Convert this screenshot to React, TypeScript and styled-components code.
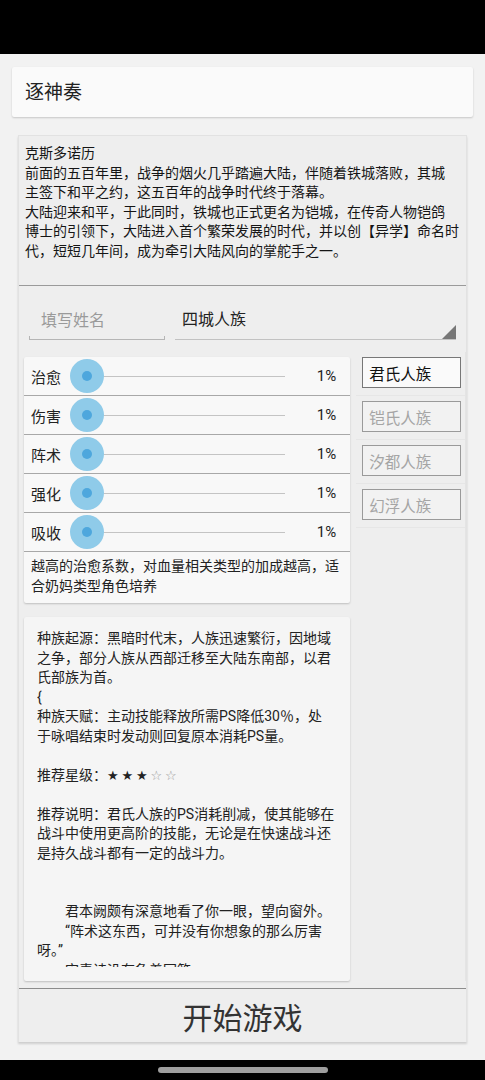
import React from 'react';
import styled, { createGlobalStyle } from 'styled-components';

const GlobalStyle = createGlobalStyle`
  html, body {
    margin: 0;
    padding: 0;
    background: #f2f2f2;
    font-family: Roboto, "Noto Sans CJK SC", sans-serif;
    color: #222;
  }
`;

const INTRO = [
  '克斯多诺历',
  '前面的五百年里，战争的烟火几乎踏遍大陆，伴随着铁城落败，其城',
  '主签下和平之约，这五百年的战争时代终于落幕。',
  '大陆迎来和平，于此同时，铁城也正式更名为铠城，在传奇人物铠鸽',
  '博士的引领下，大陆进入首个繁荣发展的时代，并以创【异学】命名时',
  '代，短短几年间，成为牵引大陆风向的掌舵手之一。',
];

const STATS = ['治愈', '伤害', '阵术', '强化', '吸收'];

const RACES = ['君氏人族', '铠氏人族', '汐都人族', '幻浮人族'];

const STORY = [
  '种族起源：黑暗时代末，人族迅速繁衍，因地域',
  '之争，部分人族从西部迁移至大陆东南部，以君',
  '氏部族为首。',
  '{',
  '种族天赋：主动技能释放所需PS降低30％，处',
  '于咏唱结束时发动则回复原本消耗PS量。',
  '',
  'STARS',
  '',
  '推荐说明：君氏人族的PS消耗削减，使其能够在',
  '战斗中使用更高阶的技能，无论是在快速战斗还',
  '是持久战斗都有一定的战斗力。',
  '',
  '',
  '　　君本阙颇有深意地看了你一眼，望向窗外。',
  '　　“阵术这东西，可并没有你想象的那么厉害',
  '呀。”',
  '　　宋责诗没有急着回答',
];

const RATING = 3;

export default function App() {
  return (
    <>
      <GlobalStyle />
      <Screen>
        <StatusBar />
        <Content>
          <TitleCard>逐神奏</TitleCard>
          <Panel>
            <Intro>
              {INTRO.map((l, i) => (
                <Line key={i}>{l}</Line>
              ))}
            </Intro>
            <FormRow>
              <NameInput>填写姓名</NameInput>
              <Spinner>
                四城人族
                <SpinnerArrow />
              </Spinner>
            </FormRow>
            <Body>
              <LeftCol>
                <SliderCard>
                  {STATS.map(s => (
                    <SliderRow key={s}>
                      <StatLabel>{s}</StatLabel>
                      <Slider>
                        <Track />
                        <Thumb />
                      </Slider>
                      <Percent>1%</Percent>
                    </SliderRow>
                  ))}
                  <StatHint>
                    越高的治愈系数，对血量相关类型的加成越高，适
                    <br />
                    合奶妈类型角色培养
                  </StatHint>
                </SliderCard>
                <StoryCard>
                  <StoryScroll>
                    {STORY.map((l, i) =>
                      l === 'STARS' ? (
                        <Line key={i}>
                          推荐星级：
                          {[0, 1, 2, 3, 4].map(n => (
                            <Star key={n} filled={n < RATING}>
                              {n < RATING ? '★' : '☆'}
                            </Star>
                          ))}
                        </Line>
                      ) : (
                        <Line key={i}>{l || '\u00a0'}</Line>
                      ),
                    )}
                  </StoryScroll>
                </StoryCard>
              </LeftCol>
              <RaceList>
                {RACES.map((r, i) => (
                  <RaceItem key={r}>
                    <RaceButton selected={i === 0}>{r}</RaceButton>
                  </RaceItem>
                ))}
              </RaceList>
            </Body>
            <StartButton>开始游戏</StartButton>
          </Panel>
        </Content>
        <NavBar>
          <NavPill />
        </NavBar>
      </Screen>
    </>
  );
}

const Screen = styled.div`
  display: flex;
  flex-direction: column;
  width: 485px;
  height: 1080px;
  overflow: hidden;
`;

const StatusBar = styled.div`
  height: 54px;
  background: #000;
  flex-shrink: 0;
`;

const Content = styled.div`
  flex: 1;
  display: flex;
  flex-direction: column;
  padding: 13px 12px 18px;
  min-height: 0;
`;

const TitleCard = styled.div`
  height: 50px;
  flex-shrink: 0;
  display: flex;
  align-items: center;
  padding: 0 0 3px 13px;
  box-sizing: border-box;
  background: #fafafa;
  border-radius: 2px;
  box-shadow: 0 1px 2px rgba(0, 0, 0, 0.18);
  font-size: 19px;
  color: #222;
  margin-bottom: 18px;
`;

const Panel = styled.div`
  flex: 1;
  margin: 0 6px;
  display: flex;
  flex-direction: column;
  background: #eeeeee;
  border: 1px solid #e2e2e2;
  border-bottom: none;
  box-shadow: 0 2px 2px rgba(0, 0, 0, 0.15);
  min-height: 0;
`;

const Line = styled.div`
  white-space: nowrap;
`;

const Intro = styled.div`
  height: 150px;
  flex-shrink: 0;
  padding: 8px 6px 0;
  box-sizing: border-box;
  font-size: 14px;
  line-height: 19.5px;
  color: #151515;
  border-bottom: 1px solid #9a9a9a;
`;

const FormRow = styled.div`
  height: 66px;
  flex-shrink: 0;
  display: flex;
  align-items: flex-end;
  gap: 10px;
  padding: 0 10px 12px 10px;
  box-sizing: border-box;
`;

const NameInput = styled.div`
  width: 136px;
  height: 40px;
  box-sizing: border-box;
  padding: 7px 0 0 11px;
  font-size: 16px;
  color: #9a9a9a;
  border-bottom: 1px solid #b5b5b5;
  border-left: 1px solid #b5b5b5;
  border-right: 1px solid #b5b5b5;
  border-image: linear-gradient(to top, #b5b5b5 0, #b5b5b5 4px, transparent 4px) 1;
`;

const Spinner = styled.div`
  flex: 1;
  position: relative;
  height: 40px;
  box-sizing: border-box;
  padding: 6px 0 0 7px;
  font-size: 16px;
  color: #222;
  border-bottom: 1px solid #c2c2c2;
`;

const SpinnerArrow = styled.div`
  position: absolute;
  right: 0;
  bottom: 0;
  width: 0;
  height: 0;
  border-left: 14px solid transparent;
  border-bottom: 14px solid #777;
`;

const Body = styled.div`
  flex: 1;
  display: flex;
  gap: 6px;
  min-height: 0;
`;

const LeftCol = styled.div`
  width: 327px;
  margin-left: 5px;
  display: flex;
  flex-direction: column;
  padding-top: 5px;
  gap: 14px;
`;

const SliderCard = styled.div`
  background: #f8f8f8;
  border-radius: 2px;
  box-shadow: 0 1px 2px rgba(0, 0, 0, 0.2);
`;

const SliderRow = styled.div`
  height: 38px;
  display: flex;
  align-items: center;
  padding: 0 14px 0 7px;
  border-bottom: 1px solid #a8a8a8;
`;

const StatLabel = styled.span`
  font-size: 15px;
  color: #222;
  width: 32px;
`;

const Slider = styled.div`
  position: relative;
  height: 38px;
  margin-left: 7px;
  width: 231px;
`;

const Track = styled.div`
  position: absolute;
  left: 17px;
  right: 16px;
  top: 19px;
  height: 1px;
  background: #c4c4c4;
`;

const Thumb = styled.div`
  position: absolute;
  left: 0;
  top: 2px;
  width: 34px;
  height: 34px;
  border-radius: 50%;
  background: #8fcbe9;
  &::after {
    content: '';
    position: absolute;
    left: 12px;
    top: 12px;
    width: 10px;
    height: 10px;
    border-radius: 50%;
    background: #4ea7dd;
  }
`;

const Percent = styled.span`
  margin-left: auto;
  font-size: 15px;
  color: #222;
`;

const StatHint = styled.div`
  padding: 5px 7px 7px;
  font-size: 14px;
  line-height: 19.5px;
  color: #222;
  white-space: nowrap;
`;

const StoryCard = styled.div`
  height: 364px;
  background: #f5f5f5;
  border-radius: 2px;
  box-shadow: 0 1px 2px rgba(0, 0, 0, 0.2);
  padding: 12px 13px 14px;
  box-sizing: border-box;
`;

const StoryScroll = styled.div`
  height: 100%;
  overflow: hidden;
  font-size: 14px;
  line-height: 19.5px;
  color: #222;
`;

const Star = styled.span<{ filled: boolean }>`
  display: inline-block;
  width: 14.5px;
  font-family: "DejaVu Sans", sans-serif;
  font-size: 13px;
  color: ${p => (p.filled ? '#222' : '#999')};
`;

const RaceList = styled.div`
  width: 109px;
  display: flex;
  flex-direction: column;
  border-right: 1px solid #e4e4e4;
`;

const RaceItem = styled.div`
  height: 44px;
  box-sizing: border-box;
  padding: 5px 4px 0 6px;
  border-bottom: 1px solid #e6e6e6;
`;

const RaceButton = styled.div<{ selected: boolean }>`
  height: 31px;
  box-sizing: border-box;
  border: 1px solid ${p => (p.selected ? '#777' : '#9a9a9a')};
  background: ${p => (p.selected ? '#fafafa' : '#f2f2f2')};
  display: flex;
  align-items: center;
  padding-left: 6px;
  font-size: 15.5px;
  color: ${p => (p.selected ? '#111' : '#a5a5a5')};
`;

const StartButton = styled.div`
  height: 53px;
  flex-shrink: 0;
  margin-top: 7px;
  border-top: 1px solid #8c8c8c;
  display: flex;
  align-items: center;
  justify-content: center;
  font-size: 30px;
  color: #333;
  background: #eeeeee;
`;

const NavBar = styled.div`
  height: 20px;
  flex-shrink: 0;
  background: #000;
  display: flex;
  justify-content: center;
  padding-top: 7px;
  box-sizing: border-box;
`;

const NavPill = styled.div`
  width: 170px;
  height: 6px;
  border-radius: 3px;
  background: #9e9e9e;
`;
